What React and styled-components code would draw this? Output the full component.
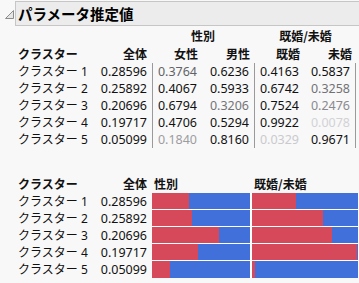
import React from "react";
import styled, { createGlobalStyle } from "styled-components";

const GlobalStyle = createGlobalStyle`
  html, body { margin: 0; padding: 0; background: #f8f8f8; }
  body {
    font-family: "Noto Sans", "Noto Sans CJK JP", sans-serif;
    font-size: 12px;
    color: #111;
  }
`;

const rows = [
  { name: "クラスター 1", total: "0.28596", f: 0.3764, m: 0.6236, mar: 0.4163, unm: 0.5837 },
  { name: "クラスター 2", total: "0.25892", f: 0.4067, m: 0.5933, mar: 0.6742, unm: 0.3258 },
  { name: "クラスター 3", total: "0.20696", f: 0.6794, m: 0.3206, mar: 0.7524, unm: 0.2476 },
  { name: "クラスター 4", total: "0.19717", f: 0.4706, m: 0.5294, mar: 0.9922, unm: 0.0078 },
  { name: "クラスター 5", total: "0.05099", f: 0.184, m: 0.816, mar: 0.0329, unm: 0.9671 },
];

const shade = (v) => {
  if (v >= 0.4) return "#111";
  const l = Math.round(212 - 300 * v);
  return `rgb(${l},${l},${l + 4})`;
};

const Page = styled.div`
  width: 359px;
  height: 283px;
  overflow: hidden;
  background: #f8f8f8;
`;

const TitleBar = styled.div`
  display: flex;
  align-items: center;
  gap: 1px;
  padding: 1px 0 0 5px;
  height: 25px;
`;

const Disclosure = styled.svg`
  width: 9px;
  height: 9px;
  flex: none;
  margin-top: 2px;
`;

const TitleBox = styled.div`
  flex: 1;
  box-sizing: border-box;
  height: 25px;
  border: 1px solid #c6c6c6;
  border-right: none;
  background: #ececec;
  display: flex;
  align-items: center;
  padding-left: 2px;
  font-family: "Noto Sans CJK JP", sans-serif;
  font-weight: 700;
  font-size: 14.5px;
  color: #000;
`;

const EstGrid = styled.div`
  display: grid;
  grid-template-columns: 82px 52px 51px 51px 51px 51px;
  grid-template-rows: 19px 18px repeat(5, 17px);
  margin-left: 18px;
`;

const GroupHead = styled.div`
  grid-column: span 2;
  text-align: center;
  font-family: "Noto Sans CJK JP", sans-serif;
  font-weight: 700;
  font-size: 12px;
  line-height: 19px;
  padding-left: ${(p) => (p.$shift ? "1px" : "0")};
`;

const ColHead = styled.div`
  font-family: "Noto Sans CJK JP", sans-serif;
  font-weight: 700;
  font-size: 12px;
  line-height: 18px;
  text-align: ${(p) => (p.$left ? "left" : "right")};
  padding-right: ${(p) => p.$pr || 0}px;
  white-space: nowrap;
`;

const Label = styled.div`
  line-height: 17px;
  font-size: 12px;
  white-space: nowrap;
  color: #111;
`;

const Num = styled.div`
  box-sizing: border-box;
  line-height: 17px;
  font-family: "Noto Sans", sans-serif;
  font-size: 12.5px;
  text-align: right;
  padding-right: ${(p) => p.$pr || 5}px;
  color: ${(p) => p.$color || "#111"};
  border-left: ${(p) => (p.$divider ? "1px solid #9a9a9a" : "none")};
  border-right: ${(p) => (p.$end ? "1px solid #9a9a9a" : "none")};
`;

const BarGrid = styled.div`
  display: grid;
  grid-template-columns: 82px 52px 100px 106px;
  grid-template-rows: 19px repeat(5, 17px);
  margin: 26px 0 0 18px;
`;

const BarHead = styled.div`
  font-family: "Noto Sans CJK JP", sans-serif;
  font-weight: 700;
  font-size: 12px;
  line-height: 19px;
  padding-left: 2px;
  white-space: nowrap;
`;

const BarCell = styled.div`
  box-sizing: border-box;
  display: flex;
  height: 17px;
  border-bottom: ${(p) => (p.$last ? "none" : "1px solid #fff")};
  border-right: ${(p) => (p.$gap ? "2px solid #fff" : "none")};
`;

const Red = styled.div`
  background: #d6495a;
  flex: none;
`;

const Blue = styled.div`
  background: #4170db;
  flex: 1;
`;

function Bar({ value, gap, last }) {
  return (
    <BarCell $gap={gap} $last={last}>
      <Red style={{ width: `${value * 100}%` }} />
      <Blue />
    </BarCell>
  );
}

export default function App() {
  return (
    <Page>
      <GlobalStyle />
      <TitleBar>
        <Disclosure viewBox="0 0 9 9">
          <path d="M0.5 8.5 L8.5 0.5 L8.5 8.5 Z" fill="#e6e6e6" stroke="#8c8c8c" strokeWidth="1" strokeLinejoin="miter" />
        </Disclosure>
        <TitleBox>パラメータ推定値</TitleBox>
      </TitleBar>

      <EstGrid>
        <div />
        <div />
        <GroupHead>性別</GroupHead>
        <GroupHead $shift>既婚/未婚</GroupHead>

        <ColHead $left>クラスター</ColHead>
        <ColHead $pr={5}>全体</ColHead>
        <ColHead $pr={5}>女性</ColHead>
        <ColHead $pr={4}>男性</ColHead>
        <ColHead $pr={5}>既婚</ColHead>
        <ColHead $pr={4}>未婚</ColHead>

        {rows.map((r) => (
          <React.Fragment key={r.name}>
            <Label>{r.name}</Label>
            <Num $pr={5}>{r.total}</Num>
            <Num $divider $pr={6} $color={shade(r.f)}>{r.f.toFixed(4)}</Num>
            <Num $pr={5} $color={shade(r.m)}>{r.m.toFixed(4)}</Num>
            <Num $divider $pr={6} $color={shade(r.mar)}>{r.mar.toFixed(4)}</Num>
            <Num $end $pr={5} $color={shade(r.unm)}>{r.unm.toFixed(4)}</Num>
          </React.Fragment>
        ))}
      </EstGrid>

      <BarGrid>
        <ColHead $left style={{ lineHeight: "19px" }}>クラスター</ColHead>
        <ColHead $pr={5} style={{ lineHeight: "19px" }}>全体</ColHead>
        <BarHead>性別</BarHead>
        <BarHead>既婚/未婚</BarHead>
        {rows.map((r, i) => (
          <React.Fragment key={r.name}>
            <Label>{r.name}</Label>
            <Num $pr={5}>{r.total}</Num>
            <Bar value={r.f} gap last={i === rows.length - 1} />
            <Bar value={r.mar} last={i === rows.length - 1} />
          </React.Fragment>
        ))}
      </BarGrid>
    </Page>
  );
}
